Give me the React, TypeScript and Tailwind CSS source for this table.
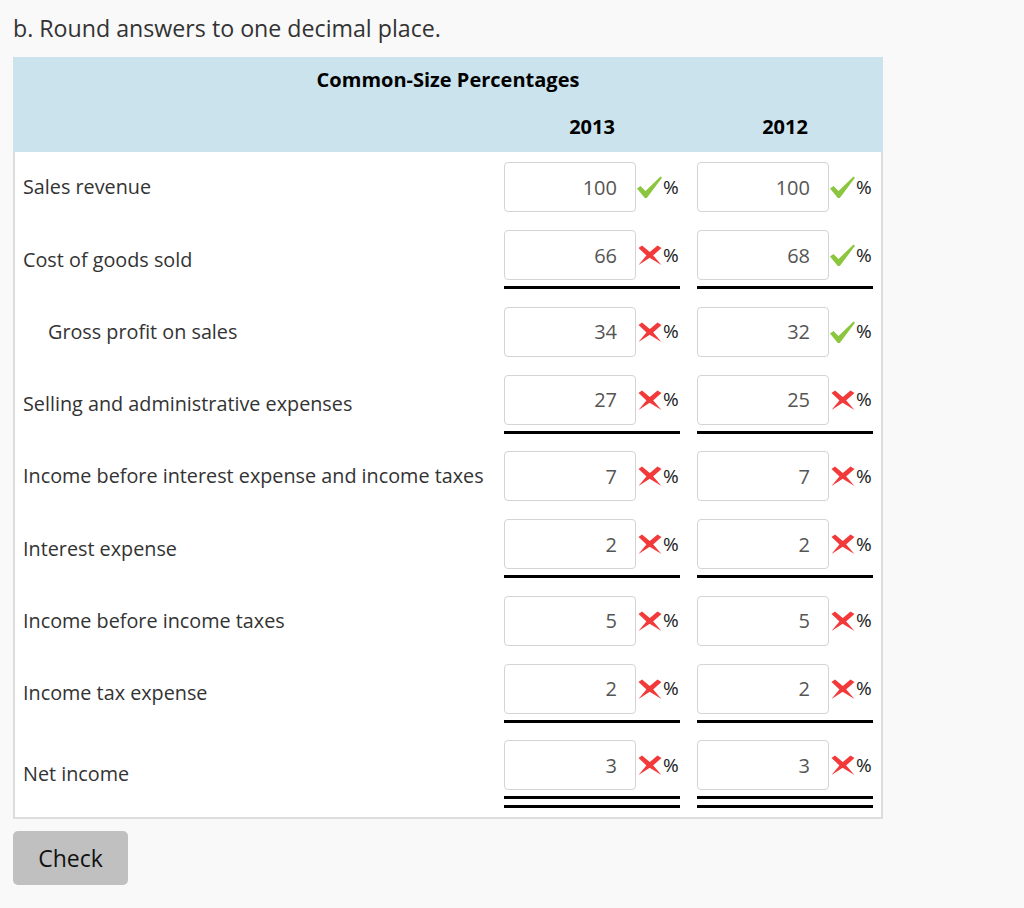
import React from "react";

type Row = {
  label: string;
  indent?: boolean;
  v: [number, number];
  ok: [boolean, boolean];
  line: 0 | 1 | 2;
};

const rows: Row[] = [
  { label: "Sales revenue", v: [100, 100], ok: [true, true], line: 0 },
  { label: "Cost of goods sold", v: [66, 68], ok: [false, true], line: 1 },
  { label: "Gross profit on sales", indent: true, v: [34, 32], ok: [false, true], line: 0 },
  { label: "Selling and administrative expenses", v: [27, 25], ok: [false, false], line: 1 },
  { label: "Income before interest expense and income taxes", v: [7, 7], ok: [false, false], line: 0 },
  { label: "Interest expense", v: [2, 2], ok: [false, false], line: 1 },
  { label: "Income before income taxes", v: [5, 5], ok: [false, false], line: 0 },
  { label: "Income tax expense", v: [2, 2], ok: [false, false], line: 1 },
  { label: "Net income", v: [3, 3], ok: [false, false], line: 2 },
];

function Check() {
  return (
    <svg width="25" height="22" viewBox="0 0 25 22" aria-hidden="true">
      <polygon points="0,12.5 3.5,10 8.5,15 23.5,0.5 25,1.8 9.8,22 7.8,22" fill="#8cc63f" />
    </svg>
  );
}

function Cross() {
  return (
    <svg width="24" height="20" viewBox="0 0 24 20" aria-hidden="true">
      <polygon points="0.5,3 4,0.5 13.5,8.5 23.5,20 9.5,11.5" fill="#f23a3a" />
      <polygon points="19.5,0.5 23.5,3 14.5,11 0.5,20 10,8.5" fill="#f23a3a" />
    </svg>
  );
}

function Cell({ value, ok, line }: { value: number; ok: boolean; line: 0 | 1 | 2 }) {
  return (
    <div className="flex flex-col w-[176px]">
      <div className="flex items-center h-[50px]">
        <input
          readOnly
          value={String(value)}
          className="w-[132px] h-[50px] border border-[#d4d4d4] rounded-[4px] bg-white text-right pr-[18px] text-[20px] text-[#555] outline-none"
          style={{ fontFamily: "'Open Sans', sans-serif" }}
        />
        <div className="w-[27px] flex justify-center items-center">{ok ? <Check /> : <Cross />}</div>
        <span className="text-[19px] text-[#222] leading-none">%</span>
      </div>
      {line >= 1 && <div className="mt-[6px] h-[3px] bg-black" />}
      {line === 2 && <div className="mt-[6px] h-[3px] bg-black" />}
    </div>
  );
}

export default function App() {
  return (
    <div
      className="min-h-[908px] bg-[#f9f9f9] pl-[13px] pt-[13px] text-[#333]"
      style={{ fontFamily: "'Open Sans', sans-serif" }}
    >
      <h1 className="text-[23.2px] leading-[30px] font-normal text-[#333]">
        b. Round answers to one decimal place.
      </h1>
      <div className="mt-[14px] w-[870px]">
        <div className="bg-[#cbe3ed] h-[95px] pt-[11px] text-black font-bold text-[20px]">
          <div className="h-[24px] leading-[24px] text-center">Common-Size Percentages</div>
          <div className="mt-[23px] h-[24px] leading-[24px] flex pl-[2px]">
            <div className="w-[489px]" />
            <div className="w-[176px] text-center">2013</div>
            <div className="w-[17px]" />
            <div className="w-[176px] text-center">2012</div>
          </div>
        </div>
        <div className="bg-white border-l-2 border-r-2 border-b-2 border-[#ddd] pt-[10px] pb-[9px] flex flex-col">
          {rows.map((r, i) => (
            <div
              key={r.label}
              className={`flex items-center ${
                i === 0 ? "" : rows[i - 1].line ? "mt-[17.5px]" : "mt-[18px]"
              }`}
            >
              <div
                className={`w-[489px] text-[19.8px] text-[#333] ${r.indent ? "pl-[33px]" : "pl-[8px]"}`}
              >
                {r.label}
              </div>
              <Cell value={r.v[0]} ok={r.ok[0]} line={r.line} />
              <div className="w-[17px]" />
              <Cell value={r.v[1]} ok={r.ok[1]} line={r.line} />
            </div>
          ))}
        </div>
      </div>
      <button className="mt-[12px] w-[115px] h-[54px] rounded-[5px] bg-[#c0c0c0] text-[23px] text-[#111]">
        Check
      </button>
    </div>
  );
}
